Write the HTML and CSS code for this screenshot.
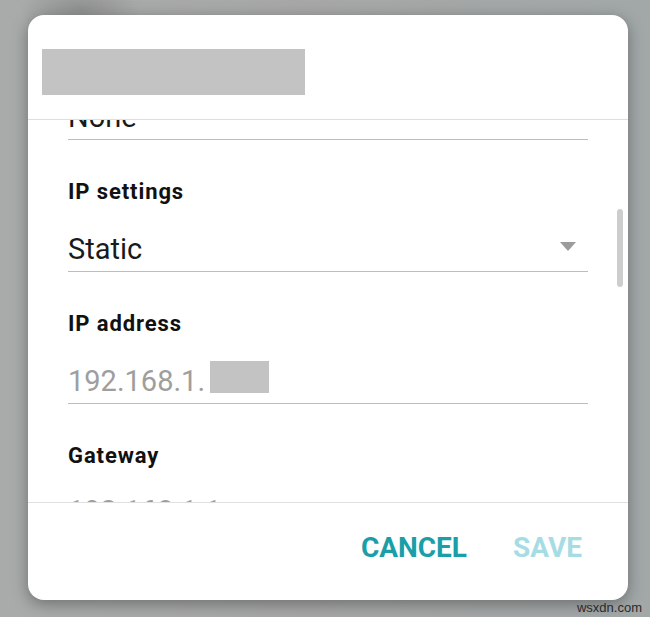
FILE: index.html
```html
<!DOCTYPE html>
<html lang="en">
<head>
<meta charset="utf-8">
<title>IP settings</title>
<link rel="stylesheet" href="styles.css">
</head>
<body>
<div class="page">
  <div class="dialog">
    <div class="dialog-header">
      <div class="title-redacted"></div>
    </div>
    <div class="dialog-body">
      <div class="scroll-content">
        <div class="field field-first">
          <div class="value">None</div>
        </div>
        <div class="field">
          <div class="label">IP settings</div>
          <div class="value select">
            <span>Static</span>
            <svg class="caret" width="16" height="9" viewBox="0 0 16 9"><polygon points="0,0 16,0 8,9" fill="#9b9b9b"/></svg>
          </div>
        </div>
        <div class="field">
          <div class="label">IP address</div>
          <div class="value muted">192.168.1.<span class="redacted"></span></div>
        </div>
        <div class="field field-last">
          <div class="label">Gateway</div>
          <div class="value muted">192.168.1.1</div>
        </div>
      </div>
      <div class="scrollbar"></div>
    </div>
    <div class="dialog-footer">
      <span class="btn btn-cancel">CANCEL</span>
      <span class="btn btn-save">SAVE</span>
    </div>
  </div>
  <div class="watermark">wsxdn.com</div>
</div>
</body>
</html>
```
FILE: styles.css
```css
html, body {
  margin: 0;
  padding: 0;
}
body {
  width: 650px;
  height: 617px;
  overflow: hidden;
  font-family: Roboto, "Noto Sans", "Liberation Sans", sans-serif;
  background:
    radial-gradient(ellipse 60px 30px at 80px 10px, rgba(120,120,120,0.5), rgba(120,120,120,0)),
    linear-gradient(90deg, #a9abab 0%, #a7a7a7 50%, #a2a8a8 100%);
}
.page {
  padding: 15px 0 0 28px;
}
.dialog {
  width: 600px;
  height: 585px;
  background: #fff;
  border-radius: 16px;
  overflow: hidden;
  display: flex;
  flex-direction: column;
  box-shadow: 0 4px 16px rgba(0,0,0,0.35);
}
.dialog-header {
  height: 105px;
  box-sizing: border-box;
  padding: 34px 0 0 14px;
  border-bottom: 1px solid #dedede;
  flex: none;
}
.title-redacted {
  width: 263px;
  height: 46px;
  background: #c3c3c3;
}
.dialog-body {
  flex: 1;
  position: relative;
  overflow: hidden;
}
.scroll-content {
  margin-top: -61px;
  padding: 0 40px;
}
.field {
  padding-top: 38px;
  border-bottom: 1px solid #bdbdbd;
  padding-bottom: 2px;
}
.label {
  font-size: 22px;
  line-height: 28px;
  font-weight: 700;
  letter-spacing: 0.9px;
  color: #111;
  margin-bottom: 23px;
}
.field-last .label {
  margin-bottom: 21px;
}
.value {
  font-size: 29px;
  line-height: 40px;
  color: #1a1a1a;
  display: flex;
  align-items: center;
}
.value.select {
  justify-content: space-between;
}
.caret {
  margin-right: 12px;
  margin-top: -6px;
}
.value.muted {
  color: #9e9e9e;
}
.redacted {
  display: inline-block;
  width: 59px;
  height: 32px;
  background: #c3c3c3;
  margin-left: 5px;
  margin-top: -8px;
}
.scrollbar {
  position: absolute;
  right: 5px;
  top: 89px;
  width: 6px;
  height: 78px;
  border-radius: 3px;
  background: #cdcdcd;
}
.dialog-footer {
  height: 98px;
  box-sizing: border-box;
  border-top: 1px solid #e0e0e0;
  flex: none;
  display: flex;
  justify-content: flex-end;
  align-items: flex-start;
  gap: 46px;
  padding: 29px 46px 0 0;
}
.btn {
  font-size: 28px;
  line-height: 32px;
  font-weight: 700;
}
.btn-cancel {
  color: #1a9ea8;
}
.btn-save {
  color: #a6dce4;
}
.watermark {
  width: 614px;
  text-align: right;
  font-family: "Liberation Sans", Arial, sans-serif;
  font-size: 13px;
  line-height: 15px;
  color: #2a2a2a;
}
```
